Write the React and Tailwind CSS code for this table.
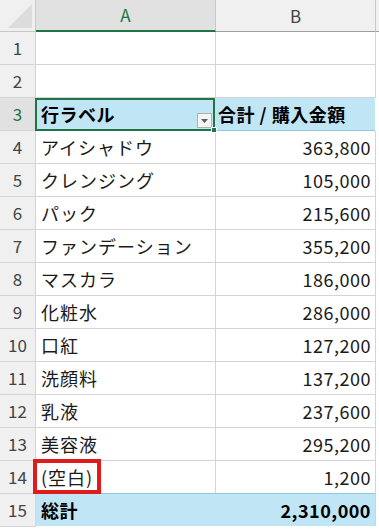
import React from 'react';

const rows = [
    { label: 'アイシャドウ', value: '363,800' },
    { label: 'クレンジング', value: '105,000' },
    { label: 'パック', value: '215,600' },
    { label: 'ファンデーション', value: '355,200' },
    { label: 'マスカラ', value: '186,000' },
    { label: '化粧水', value: '286,000' },
    { label: '口紅', value: '127,200' },
    { label: '洗顔料', value: '137,200' },
    { label: '乳液', value: '237,600' },
    { label: '美容液', value: '295,200' },
    { label: '(空白)', value: '1,200' },
];

const font = { fontFamily: '"Noto Sans CJK JP", "Noto Sans", sans-serif' };

const RowHead = ({ n, active }) => (
    <div
        className={`w-[36px] h-[33px] shrink-0 flex items-center justify-center text-[17px] border-b border-r border-[#d4d4d4] ${
            active ? 'bg-[#e1e1e1] text-[#217346] border-r-[#217346]' : 'bg-[#f0f0f0] text-[#444]'
        }`}
    >
        {n}
    </div>
);

const App = () => {
    return (
        <div className="w-[379px] h-[532px] bg-white overflow-hidden relative" style={font}>
            {/* column letters */}
            <div className="flex h-[32px]">
                <div className="w-[36px] shrink-0 bg-[#f0f0f0] border-r border-b border-[#c8c8c8] relative overflow-hidden">
                    <svg className="absolute right-[3px] bottom-[3px]" width="24" height="24" viewBox="0 0 24 24">
                        <polygon points="24,0 24,24 0,24" fill="#dcdcdc" />
                    </svg>
                </div>
                <div className="w-[180px] shrink-0 bg-[#e1e1e1] border-r border-[#c8c8c8] border-b-2 border-b-[#217346] flex items-center justify-center text-[17px] text-[#217346]">
                    A
                </div>
                <div className="w-[160px] shrink-0 bg-[#f0f0f0] border-r border-[#c8c8c8] border-b border-b-[#9e9e9e] flex items-center justify-center text-[17px] text-[#444]">
                    B
                </div>
                <div className="flex-1 bg-[#f0f0f0] border-b border-b-[#9e9e9e]" />
            </div>

            {/* empty rows */}
            {[1, 2].map((n) => (
                <div key={n} className="flex">
                    <RowHead n={n} />
                    <div className="w-[180px] h-[33px] shrink-0 border-r border-b border-[#d4d4d4]" />
                    <div className="w-[160px] h-[33px] shrink-0 border-r border-b border-[#d4d4d4]" />
                </div>
            ))}

            {/* pivot header */}
            <div className="flex">
                <RowHead n={3} active />
                <div className="w-[180px] h-[33px] shrink-0 bg-[#c0e6f5] border-2 border-[#217346] relative flex items-center pl-[4px] font-bold text-[18px] tracking-[0.5px] text-black -ml-px">
                    行ラベル
                    <div className="absolute right-[1px] bottom-[1px] w-[15px] h-[15px] bg-[#f4f4f4] border border-[#b0b0b0] flex items-center justify-center">
                        <svg width="7" height="4" viewBox="0 0 7 4">
                            <polygon points="0,0 7,0 3.5,4" fill="#606060" />
                        </svg>
                    </div>
                    <div className="absolute -right-[4px] -bottom-[4px] w-[6px] h-[6px] bg-[#217346] border border-white" />
                </div>
                <div className="w-[160px] h-[33px] shrink-0 bg-[#c0e6f5] border-b border-b-[#8ecae6] flex items-center pl-[3px] font-bold text-[18px] tracking-[0.5px] whitespace-pre text-black">
                    合計 / 購入金額
                </div>
            </div>

            {rows.map((r, i) => (
                <div key={r.label} className="flex">
                    <RowHead n={i + 4} />
                    <div className="w-[180px] h-[33px] shrink-0 border-r border-b border-[#d4d4d4] flex items-center pl-[5px] text-[18px] tracking-[1px] text-[#1a1a1a]">
                        {r.label}
                    </div>
                    <div className="w-[160px] h-[33px] shrink-0 border-r border-b border-[#d4d4d4] flex items-center justify-end pr-[4px] text-[18px] tracking-[0.5px] text-[#1a1a1a]">
                        {r.value}
                    </div>
                </div>
            ))}

            {/* grand total */}
            <div className="flex">
                <RowHead n={15} />
                <div className="w-[180px] h-[33px] shrink-0 bg-[#c0e6f5] border-t border-t-[#8ecae6] -mt-px flex items-center pl-[5px] font-bold text-[18px] tracking-[0.5px] text-black">
                    総計
                </div>
                <div className="w-[160px] h-[33px] shrink-0 bg-[#c0e6f5] border-t border-t-[#8ecae6] -mt-px border-r border-r-[#d4d4d4] flex items-center justify-end pr-[4px] font-bold text-[18px] tracking-[0.5px] text-black">
                    2,310,000
                </div>
            </div>

            {/* highlight around the blank item */}
            <div className="absolute left-[33px] top-[459px] w-[68px] h-[35px] border-[4px] border-[#e01b1b]" />
        </div>
    );
};

export default App;
